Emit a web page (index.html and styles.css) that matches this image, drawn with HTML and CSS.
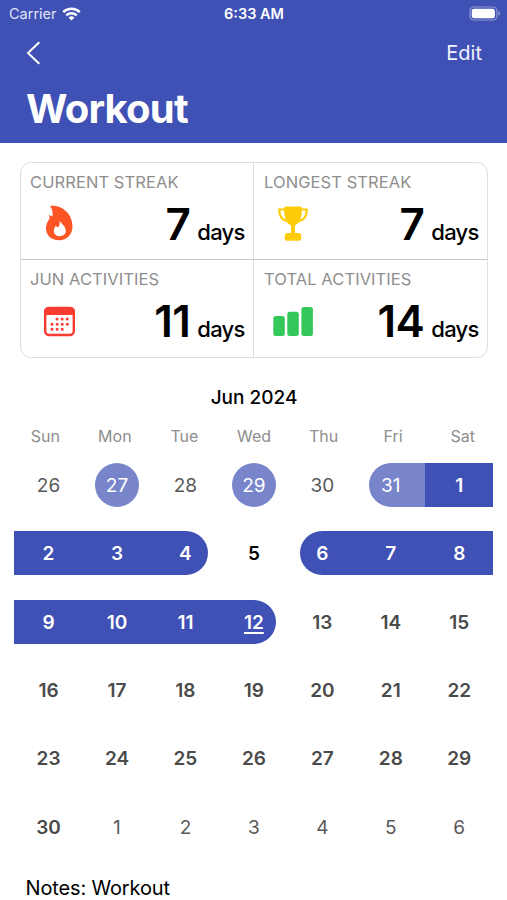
FILE: index.html
```html
<!DOCTYPE html>
<html lang="en">
<head>
<meta charset="utf-8">
<title>Workout</title>
<link rel="stylesheet" href="styles.css">
</head>
<body>
<header class="header">
  <div class="status">
    <div class="carrier"><span class="carrier-name">Carrier</span>
      <svg class="wifi" width="19" height="14" viewBox="0 0 19 14"><g fill="none" stroke="#fff" stroke-width="2.4"><path d="M1.2 5.2a11.8 11.8 0 0 1 16.6 0"/><path d="M4.3 8.4a7.4 7.4 0 0 1 10.4 0"/></g><path d="M9.5 13.6 6.6 10.7a4.1 4.1 0 0 1 5.8 0z" fill="#fff"/></svg>
    </div>
    <div class="clock">6:33 AM</div>
    <svg class="battery" width="32" height="15" viewBox="0 0 32 15"><rect x="1" y="1" width="27" height="13" rx="4" fill="none" stroke="#8f99d4" stroke-width="1.2"/><rect x="2.7" y="2.7" width="23.2" height="9.6" rx="2.4" fill="#fff"/><path d="M29.5 5.2a2.4 2.4 0 0 1 0 4.6z" fill="#8f99d4"/></svg>
  </div>
  <nav class="nav">
    <svg class="back" width="16" height="24" viewBox="0 0 16 24"><path d="M14.300 1.200 3 12l11.300 10.800" fill="none" stroke="#fff" stroke-width="2"/></svg>
    <span class="edit">Edit</span>
  </nav>
  <h1 class="title">Workout</h1>
</header>
<main>
  <section class="stats">
    <div class="stat"><div class="label">CURRENT STREAK</div><div class="row">
      <svg class="icon" width="42" height="45" viewBox="0 0 42 45"><path d="M12 5C23 3.500 34.500 12 34.500 25.500c0 8-5.500 13.700-13.500 13.700C13 39.200 8 34 8 27.500c0-4 1.500-7 3.600-9.700L11 14l3.500 1.500c.6-3.800-.1-7.500-2.500-10.500z" fill="#fc5523"/><path d="M21.500 20c3.200 3.500 6.300 6 6.300 9.800 0 3.300-2.700 5.400-6 5.400-3.400 0-6-2.200-6-5.300 0-2 .8-3.600 2-5l2 1.700c1.700-1.500 2.300-3.800 1.700-6.600z" fill="#fff"/></svg>
      <div class="value"><b>7</b><span>days</span></div></div></div>
    <div class="stat"><div class="label">LONGEST STREAK</div><div class="row">
      <svg class="icon" width="46" height="45" viewBox="0 0 46 45"><path d="M15 9.500H9.200c0 7 3 11 9.300 12M31 9.500h5.800c0 7-3 11-9.300 12" fill="none" stroke="#fecb09" stroke-width="2.200"/><path d="M16 6.500h14q2 0 2 2c0 9-2.500 15-7 17v7.500h3.500q2.700 0 2.700 2.700V39q0 1.700-1.700 1.700H16.500q-1.700 0-1.700-1.700v-3.300q0-2.700 2.700-2.700H21v-7.500c-4.500-2-7-8-7-17q0-2 2-2z" fill="#fecb09"/></svg>
      <div class="value"><b>7</b><span>days</span></div></div></div>
    <div class="stat"><div class="label">JUN ACTIVITIES</div><div class="row">
      <svg class="icon" width="42" height="42" viewBox="0 0 42 42"><rect x="7.200" y="8" width="28.600" height="27" rx="4" fill="none" stroke="#fc3b30" stroke-width="2.400"/><path d="M6 15v-3q0-5 5-5h21q5 0 5 5v3z" fill="#fc3b30"/><g stroke="#fc3b30" stroke-width="3" stroke-linecap="round" stroke-dasharray="0 5.100"><path d="M19 19h11M14 24.300h16.500M14 29.300h11"/></g></svg>
      <div class="value"><b>11</b><span>days</span></div></div></div>
    <div class="stat"><div class="label">TOTAL ACTIVITIES</div><div class="row">
      <svg class="icon" width="46" height="42" viewBox="0 0 46 42" fill="#34c759"><rect x="3.300" y="16" width="11.500" height="20" rx="2.500"/><rect x="17.300" y="11.700" width="11.500" height="24.300" rx="2.500"/><rect x="31.400" y="7" width="11.500" height="29" rx="2.500"/></svg>
      <div class="value"><b>14</b><span>days</span></div></div></div>
  </section>
  <h2 class="month">Jun 2024</h2>
  <div class="weekdays"><span>Sun</span><span>Mon</span><span>Tue</span><span>Wed</span><span>Thu</span><span>Fri</span><span>Sat</span></div>
  <div class="calendar">
    <div class="day other"><span>26</span></div><div class="day other done start end"><span>27</span></div><div class="day other"><span>28</span></div><div class="day other done start end"><span>29</span></div><div class="day other"><span>30</span></div><div class="day other done start"><span>31</span></div><div class="day done"><span>1</span></div>
    <div class="day done"><span>2</span></div><div class="day done"><span>3</span></div><div class="day done end"><span>4</span></div><div class="day past"><span>5</span></div><div class="day done start"><span>6</span></div><div class="day done"><span>7</span></div><div class="day done"><span>8</span></div>
    <div class="day done"><span>9</span></div><div class="day done"><span>10</span></div><div class="day done"><span>11</span></div><div class="day done end today"><span>12</span></div><div class="day"><span>13</span></div><div class="day"><span>14</span></div><div class="day"><span>15</span></div>
    <div class="day"><span>16</span></div><div class="day"><span>17</span></div><div class="day"><span>18</span></div><div class="day"><span>19</span></div><div class="day"><span>20</span></div><div class="day"><span>21</span></div><div class="day"><span>22</span></div>
    <div class="day"><span>23</span></div><div class="day"><span>24</span></div><div class="day"><span>25</span></div><div class="day"><span>26</span></div><div class="day"><span>27</span></div><div class="day"><span>28</span></div><div class="day"><span>29</span></div>
    <div class="day"><span>30</span></div><div class="day other"><span>1</span></div><div class="day other"><span>2</span></div><div class="day other"><span>3</span></div><div class="day other"><span>4</span></div><div class="day other"><span>5</span></div><div class="day other"><span>6</span></div>
  </div>
  <p class="notes">Notes: Workout</p>
</main>
</body>
</html>
```
FILE: styles.css
```css
* { box-sizing: border-box; }
body { margin: 0; height: 900px; overflow: hidden; background: #fff; color: #000; font-family: Inter, sans-serif; }
h1, h2, p { margin: 0; }
svg { display: block; flex: none; }

.header { height: 142.5px; background: #3f51b5; color: #fff; }
.status { display: grid; grid-template-columns: 1fr auto 1fr; align-items: center; height: 27px; padding: 0 6px 0 9px; }
.carrier { display: flex; align-items: center; gap: 5px; font-size: 14.5px; }
.carrier-name { color: #e1e5f8; }
.clock { margin-left: -2px; font-size: 14.5px; font-weight: 600; }
.battery { justify-self: end; }
.nav { display: flex; justify-content: space-between; align-items: center; height: 51px; padding: 0 25px; }
.edit { font-size: 20px; color: #f0f2ff; }
.title { padding-left: 26px; font-size: 40px; line-height: 62px; font-weight: 700; letter-spacing: -0.8px; }

.stats { display: grid; grid-template-columns: 233px 1fr; grid-template-rows: 97px 1fr; width: 468px; height: 196px; margin: 19.500px 0 0 20px; border: 1px solid #dedede; border-radius: 11px; }
.stat { padding: 9px 9px 0; }
.stat:nth-child(even) { padding-left: 10px; }
.stat:nth-child(odd) { border-right: 1px solid #dedede; }
.stat:nth-child(-n+2) { border-bottom: 1px solid #c8c8c8; }
.label { font-size: 16.500px; line-height: 20px; color: #8e8e8e; letter-spacing: 0.08px; }
.row { display: flex; justify-content: space-between; height: 60px; padding-top: 1px; }
.icon { margin: 8px 0 0 8px; }
.stat:nth-child(n+3) .icon { margin-top: 10px; }
.stat:nth-child(even) .icon { margin-left: 6px; }
.stat:nth-child(2) .icon { margin-top: 7px; }
.value { display: flex; align-items: baseline; gap: 7px; }
.value b { font-size: 44px; line-height: 62px; font-weight: 600; letter-spacing: -0.6px; }
.value span { font-size: 22px; font-weight: 500; letter-spacing: -0.7px; margin-right: -0.7px; }

.month { margin-top: 27px; padding-left: 1px; text-align: center; font-size: 19px; line-height: 26px; font-weight: 500; }
.weekdays { display: grid; grid-template-columns: repeat(7, 1fr); margin: 12px 9.5px 0 10.5px; text-align: center; font-size: 16px; line-height: 26px; color: #8e8e8e; }
.calendar { display: grid; grid-template-columns: repeat(7, 1fr); grid-auto-rows: 68.400px; margin: 1.700px 13.500px 0 14.300px; align-items: center; }
.day { display: flex; align-items: center; justify-content: center; height: 44px; padding-top: 1px; font-size: 19px; font-weight: 600; color: #4a4a4a; }
.other { font-weight: 400; color: #595959; }
.past { color: #000; }
.done { background: #3f51b5; color: #fff; }
.other.done { background: #7985cb; }
.start { margin-left: 12px; padding-right: 12px; border-radius: 22px 0 0 22px; }
.end { margin-right: 12px; padding-left: 12px; border-radius: 0 22px 22px 0; }
.start.end { padding: 1px 0 0; border-radius: 22px; }
.today span { text-decoration: underline; text-decoration-thickness: 2px; text-underline-offset: 3px; }
.notes { padding: 14px 0 0 25.5px; font-size: 20px; line-height: 26px; letter-spacing: -0.15px; }
```
